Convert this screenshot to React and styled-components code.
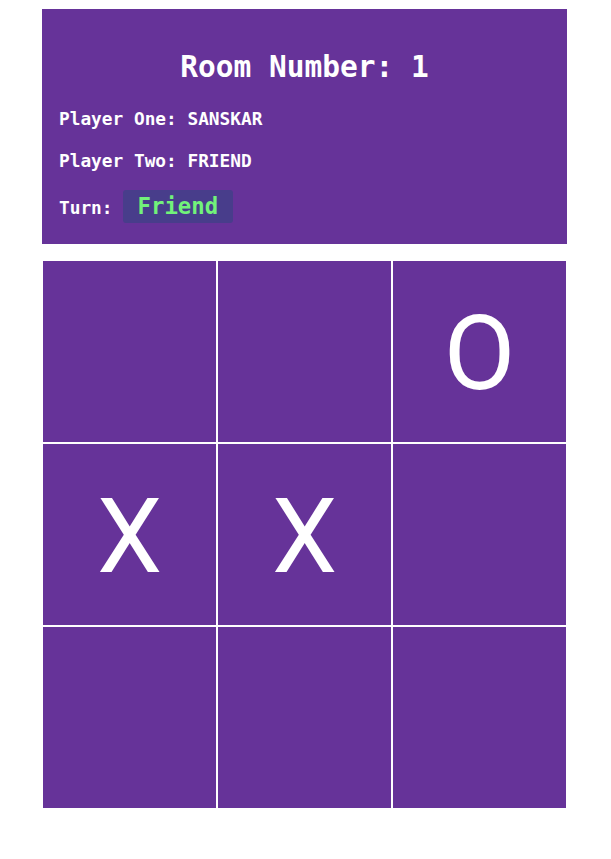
import React from "react";
import styled, { createGlobalStyle } from "styled-components";

const Global = createGlobalStyle`
  html, body { margin: 0; padding: 0; background: #ffffff; }
  body { font-family: "DejaVu Sans Mono", monospace; }
`;

const Page = styled.div`
  width: 525px;
  padding: 9px 44px 40px 42px;
  display: flex;
  flex-direction: column;
  gap: 16px;
`;

const Header = styled.header`
  background: #663399;
  color: #ffffff;
  padding: 40px 17px 21px;
  display: flex;
  flex-direction: column;
`;

const Title = styled.h1`
  margin: 0 0 23px;
  font-family: "DejaVu Sans Mono", monospace;
  font-weight: 700;
  font-size: 29.5px;
  line-height: 36px;
  text-align: center;
`;

const InfoLine = styled.p`
  margin: 0 0 ${(p) => p.$gap}px;
  font-family: "DejaVu Sans Mono", monospace;
  font-weight: 700;
  font-size: 17.8px;
  line-height: 22px;
`;

const TurnRow = styled.div`
  display: flex;
  align-items: baseline;
  gap: 10px;
  font-family: "DejaVu Sans Mono", monospace;
  font-weight: 700;
  font-size: 17.8px;
`;

const Badge = styled.span`
  background: #483d8b;
  color: #72f27a;
  border-radius: 3px;
  padding: 2px 15px;
  font-size: 22.3px;
  line-height: 29px;
  font-weight: 700;
`;

const Board = styled.div`
  display: grid;
  grid-template-columns: repeat(3, 175px);
  grid-auto-rows: 183px;
`;

const Cell = styled.div`
  box-sizing: border-box;
  border: 1px solid #ffffff;
  background: #663399;
  color: #ffffff;
  display: flex;
  align-items: center;
  justify-content: center;
  font-family: Roboto, "Noto Sans", sans-serif;
  font-weight: 400;
  font-size: 104px;
  line-height: 1;
  padding-top: 4px;
`;

const cells = ["", "", "O", "X", "X", "", "", "", ""];

export default function App() {
  return (
    <>
      <Global />
      <Page>
        <Header>
          <Title>Room Number: 1</Title>
          <InfoLine $gap={20}>Player One: SANSKAR</InfoLine>
          <InfoLine $gap={18}>Player Two: FRIEND</InfoLine>
          <TurnRow>
            <span>Turn:</span>
            <Badge>Friend</Badge>
          </TurnRow>
        </Header>
        <Board>
          {cells.map((c, i) => (
            <Cell key={i}>{c}</Cell>
          ))}
        </Board>
      </Page>
    </>
  );
}
